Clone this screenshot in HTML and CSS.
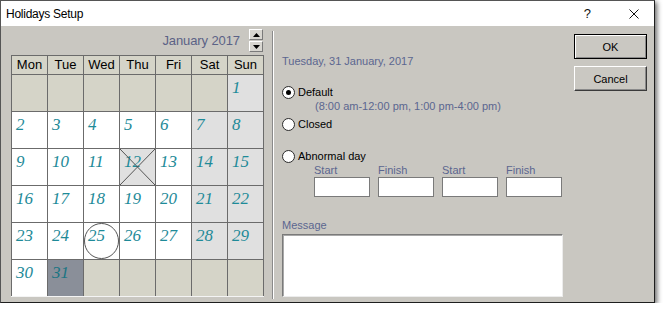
FILE: index.html
```html
<!DOCTYPE html>
<html>
<head>
    <title>Holidays Setup</title>
    <link rel="stylesheet" href="styles.css">
</head>
<body>
<div class="window">
    <div class="titlebar">
        <span class="title">Holidays Setup</span>
        <span class="help">?</span>
        <svg class="close" width="10" height="10" viewBox="0 0 10 10"><path d="M0.5 0.5L9.5 9.5M9.5 0.5L0.5 9.5" stroke="#111" stroke-width="1"/></svg>
    </div>
    <div class="body">
        <div class="calendar">
            <div class="cal-head">
                <span class="month">January 2017</span>
                <div class="spin">
                    <span class="spin-btn"><svg width="7" height="4" viewBox="0 0 7 4"><path d="M3.5 0L7 4H0Z" fill="#000"/></svg></span>
                    <span class="spin-btn"><svg width="7" height="4" viewBox="0 0 7 4"><path d="M0 0H7L3.5 4Z" fill="#000"/></svg></span>
                </div>
            </div>
            <div class="grid">
                <div class="dow">Mon</div><div class="dow">Tue</div><div class="dow">Wed</div><div class="dow">Thu</div><div class="dow">Fri</div><div class="dow">Sat</div><div class="dow">Sun</div>

                <div class="day out"></div><div class="day out"></div><div class="day out"></div><div class="day out"></div><div class="day out"></div><div class="day out"></div><div class="day wkend">1</div>

                <div class="day">2</div><div class="day">3</div><div class="day">4</div><div class="day">5</div><div class="day">6</div><div class="day wkend">7</div><div class="day wkend">8</div>

                <div class="day">9</div><div class="day">10</div><div class="day">11</div>
                <div class="day holiday">12<svg class="mark" width="35" height="36" viewBox="0 0 35 36"><path d="M0 0L35 36M35 0L0 36" stroke="#555" stroke-width="1"/></svg></div>
                <div class="day">13</div><div class="day wkend">14</div><div class="day wkend">15</div>

                <div class="day">16</div><div class="day">17</div><div class="day">18</div><div class="day">19</div><div class="day">20</div><div class="day wkend">21</div><div class="day wkend">22</div>

                <div class="day">23</div><div class="day">24</div>
                <div class="day">25<svg class="mark" width="35" height="36" viewBox="0 0 35 36"><ellipse cx="17.5" cy="18" rx="17" ry="17.5" fill="none" stroke="#555" stroke-width="1"/></svg></div>
                <div class="day">26</div><div class="day">27</div><div class="day wkend">28</div><div class="day wkend">29</div>

                <div class="day">30</div><div class="day selected">31</div><div class="day out"></div><div class="day out"></div><div class="day out"></div><div class="day out"></div><div class="day out"></div>
            </div>
        </div>
        <div class="sep"></div>
        <div class="details">
            <div class="date">Tuesday, 31 January, 2017</div>
            <div class="radio first"><span class="dot checked"></span>Default</div>
            <div class="hours">(8:00 am-12:00 pm, 1:00 pm-4:00 pm)</div>
            <div class="radio closed"><span class="dot"></span>Closed</div>
            <div class="radio abnormal"><span class="dot"></span>Abnormal day</div>
            <div class="times">
                <div class="field"><span class="lbl">Start</span><span class="box"></span></div>
                <div class="field"><span class="lbl">Finish</span><span class="box"></span></div>
                <div class="field"><span class="lbl">Start</span><span class="box"></span></div>
                <div class="field"><span class="lbl">Finish</span><span class="box"></span></div>
            </div>
            <div class="msg-label">Message</div>
            <div class="message"></div>
        </div>
        <div class="buttons">
            <div class="btn default">OK</div>
            <div class="btn">Cancel</div>
        </div>
    </div>
</div>
</body>
</html>
```

FILE: styles.css
```css
body { margin: 0; background: #fff; font-family: "Liberation Sans", Arial, sans-serif; }
.window { width: 655px; height: 303px; box-sizing: border-box; border: 1px solid #555; border-right-color: #1e1e1e; border-bottom-color: #1e1e1e; display: flex; flex-direction: column; box-shadow: 2px 2px 5px rgba(0,0,0,.6); }

.titlebar { height: 25px; background: #fff; display: flex; align-items: center; padding-left: 5px; }
.title { font-size: 12px; color: #000; letter-spacing: -0.25px; }
.help { margin-left: auto; font-size: 13px; color: #111; }
.close { margin-left: 38px; margin-right: 15px; }

.body { flex: 1; background: #c9c7c1; display: flex; }

.calendar { width: 261px; padding-left: 10px; }
.cal-head { height: 29px; width: 253px; display: flex; align-items: center; justify-content: flex-end; }
.month { font-size: 13px; color: #5b6286; margin-right: 9px; letter-spacing: -0.1px; }
.spin { display: flex; flex-direction: column; width: 14px; height: 23px; gap: 1px; margin-right: 1px; }
.spin-btn { height: 11px; box-sizing: border-box; background: #d8d6d0; border: 1px solid; border-color: #fff #7a7a7a #7a7a7a #fff; display: flex; align-items: center; justify-content: center; }

.grid { display: grid; grid-template-columns: repeat(7, 35px); grid-template-rows: 18px repeat(6, 36px); gap: 1px; padding: 1px 1px 0 1px; background: #6b6b6b; border-bottom: 1px solid #f4f4f4; width: 251px; }
.dow { background: #d5d4c8; font-size: 13px; color: #000; text-align: center; line-height: 18px; }
.day { position: relative; background: #fff; font-family: "Liberation Serif", "Times New Roman", serif; font-style: italic; font-size: 17px; line-height: 17px; color: #1e8a98; padding: 4px 0 0 4px; box-sizing: border-box; }
.day.out { background: #d5d4c8; }
.day.wkend { background: #e0e0e0; }
.day.holiday { background: #e0e0e0; }
.day.selected { background: #8a8f99; color: #1b7583; }
.mark { position: absolute; left: 0; top: 0; }

.sep { width: 1px; border-left: 1px solid #8a8a8a; border-right: 1px solid #fff; margin: 5px 0 3px 0; width: 0; }

.details { width: 292px; padding: 28px 0 0 8px; font-size: 11px; line-height: 14px; color: #000; }
.date { color: #5b6690; }
.radio { display: flex; align-items: center; height: 14px; }
.radio.first { margin-top: 17px; }
.radio.closed { margin-top: 4px; }
.radio.abnormal { margin-top: 18px; }
.dot { width: 13px; height: 13px; box-sizing: border-box; border: 1px solid #2a2a2a; border-radius: 50%; background: #fff; margin-right: 3px; display: flex; align-items: center; justify-content: center; }
.dot.checked::after { content: ""; width: 5px; height: 5px; border-radius: 50%; background: #000; }
.hours { padding-left: 33px; color: #5b6690; }
.times { display: flex; gap: 8px; padding-left: 32px; margin-top: 0; }
.field { display: flex; flex-direction: column; }
.lbl { color: #5b6690; line-height: 14px; }
.box { width: 56px; height: 20px; box-sizing: border-box; border: 1px solid #7a7a7a; background: #fff; }
.msg-label { color: #5b6690; margin-top: 21px; }
.message { width: 281px; height: 63px; margin-top: 2px; box-sizing: border-box; background: #fff; border: 1px solid; border-color: #7a7a7a #ececec #ececec #7a7a7a; box-shadow: inset 1px 1px 0 #a8a8a8; }

.buttons { width: 73px; padding-top: 8px; display: flex; flex-direction: column; gap: 7px; }
.btn { height: 25px; box-sizing: border-box; background: #cac8c2; font-size: 11px; color: #000; display: flex; align-items: center; justify-content: center; border: 1px solid; border-color: #fff #3a3a3a #3a3a3a #fff; box-shadow: inset -1px -1px 0 #8a8a8a; }
.btn.default { border-color: #000; box-shadow: inset 1px 1px 0 #fff, inset -1px -1px 0 #8a8a8a; }
```
